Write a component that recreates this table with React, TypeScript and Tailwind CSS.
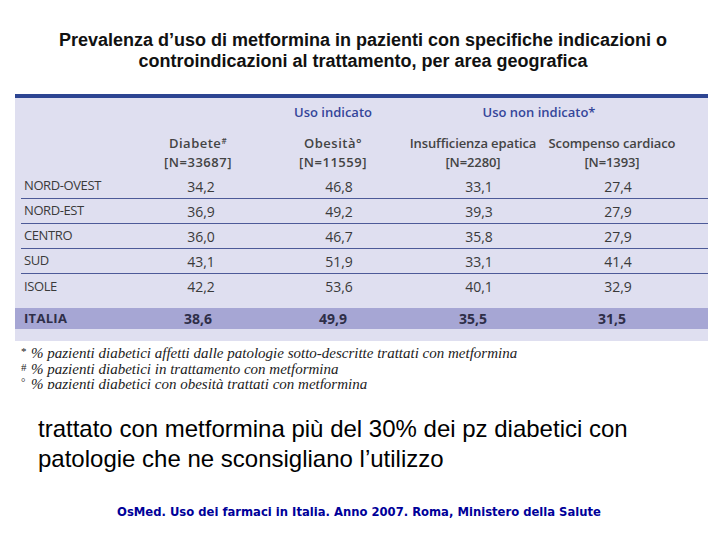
import React from "react";

const rows = [
  { area: "NORD-OVEST", values: ["34,2", "46,8", "33,1", "27,4"] },
  { area: "NORD-EST", values: ["36,9", "49,2", "39,3", "27,9"] },
  { area: "CENTRO", values: ["36,0", "46,7", "35,8", "27,9"] },
  { area: "SUD", values: ["43,1", "51,9", "33,1", "41,4"] },
  { area: "ISOLE", values: ["42,2", "53,6", "40,1", "32,9"] },
];

const footnotes = [
  { mark: "*", text: "% pazienti diabetici affetti dalle patologie sotto-descritte trattati con metformina" },
  { mark: "#", text: "% pazienti diabetici in trattamento con metformina" },
  { mark: "°", text: "% pazienti diabetici con obesità trattati con metformina" },
];

const grid = "grid grid-cols-[115px_136px_134px_146px_132px_1fr]";

const App = () => {
  return (
    <div className="w-[720px] h-[540px] bg-white overflow-hidden flex flex-col">
      {/* title */}
      <h1 className="pt-[30px] pl-[6px] text-center text-[18px] leading-[21px] font-bold text-[#111] font-['Liberation_Sans',Arial,sans-serif]">
        Prevalenza d’uso di metformina in pazienti con specifiche indicazioni o
        <br />
        controindicazioni al trattamento, per area geografica
      </h1>

      {/* table scan */}
      <div className="mt-[22px] ml-[15px] w-[693px] font-['Open_Sans','DejaVu_Sans',sans-serif] text-[#3a3a3a]">
        <div className="bg-[#dfdff0]">
          <div className="h-[4px] bg-[#2d4592]" />

          <div className={`${grid} h-[30px] items-center text-[13px] font-semibold text-[#35469a]`}>
            <div />
            <div />
            <div className="text-center">Uso indicato</div>
            <div className="col-span-2 text-center">Uso non indicato*</div>
            <div />
          </div>

          <div className={`${grid} pt-[6px] pb-[2px] text-[13px] leading-[19px] font-semibold text-[#444]`}>
            <div />
            <div className="text-center tracking-[0.5px]">
              Diabete<sup className="text-[8px]">#</sup>
              <br />
              [N=33687]
            </div>
            <div className="text-center tracking-[0.5px]">
              Obesità°
              <br />
              [N=11559]
            </div>
            <div className="text-center tracking-[-0.1px]">
              Insufficienza epatica
              <br />
              [N=2280]
            </div>
            <div className="text-center tracking-[-0.1px] whitespace-nowrap">
              Scompenso cardiaco
              <br />
              [N=1393]
            </div>
            <div />
          </div>

          {rows.map((row, i) => (
            <div
              key={row.area}
              className={`${grid} h-[25px] items-center text-[14px] ${
                i < rows.length - 1 ? "border-b border-[#4d5a98] ml-[6px]" : "ml-[6px]"
              }`}
            >
              <div className="pl-[3px] text-[13px] tracking-[-0.4px]">{row.area}</div>
              {row.values.map((v, j) => (
                <div key={j} className={`text-center ${j === 0 ? "-ml-[6px]" : ""}`}>
                  {v}
                </div>
              ))}
              <div />
            </div>
          ))}

          <div className="h-[9px]" />
          <div className={`${grid} h-[21px] items-center bg-[#a6a6d4] text-[14px] font-bold text-[#2e2e48]`}>
            <div className="pl-[9px] text-[13px] tracking-[0.3px]">ITALIA</div>
            <div className="text-center">38,6</div>
            <div className="text-center">49,9</div>
            <div className="text-center">35,5</div>
            <div className="text-center">31,5</div>
            <div />
          </div>
          <div className="h-[12px]" />
        </div>

        {/* footnotes, cut off at the bottom as in the scan */}
        <div className="h-[48px] overflow-hidden pt-[5px] pl-[6px] font-['Liberation_Serif',serif] italic text-[15px] leading-[15.5px] text-[#222]">
          {footnotes.map((f) => (
            <div key={f.mark} className="flex">
              <span className="w-[10px] not-italic text-[11px] -mt-[2px]">{f.mark}</span>
              <span>{f.text}</span>
            </div>
          ))}
        </div>
      </div>

      {/* comment */}
      <p className="mt-[25px] pl-[38px] text-[24px] leading-[30px] text-black font-['Liberation_Sans',Arial,sans-serif]">
        trattato con metformina più del 30% dei pz diabetici con
        <br />
        patologie che ne sconsigliano l’utilizzo
      </p>

      {/* source */}
      <p className="mt-[31px] text-center pr-[2px] text-[11.6px] leading-[14px] font-bold text-[#000099] font-['DejaVu_Sans',sans-serif]">
        OsMed. Uso dei farmaci in Italia. Anno 2007. Roma, Ministero della Salute
      </p>
    </div>
  );
};

export default App;
